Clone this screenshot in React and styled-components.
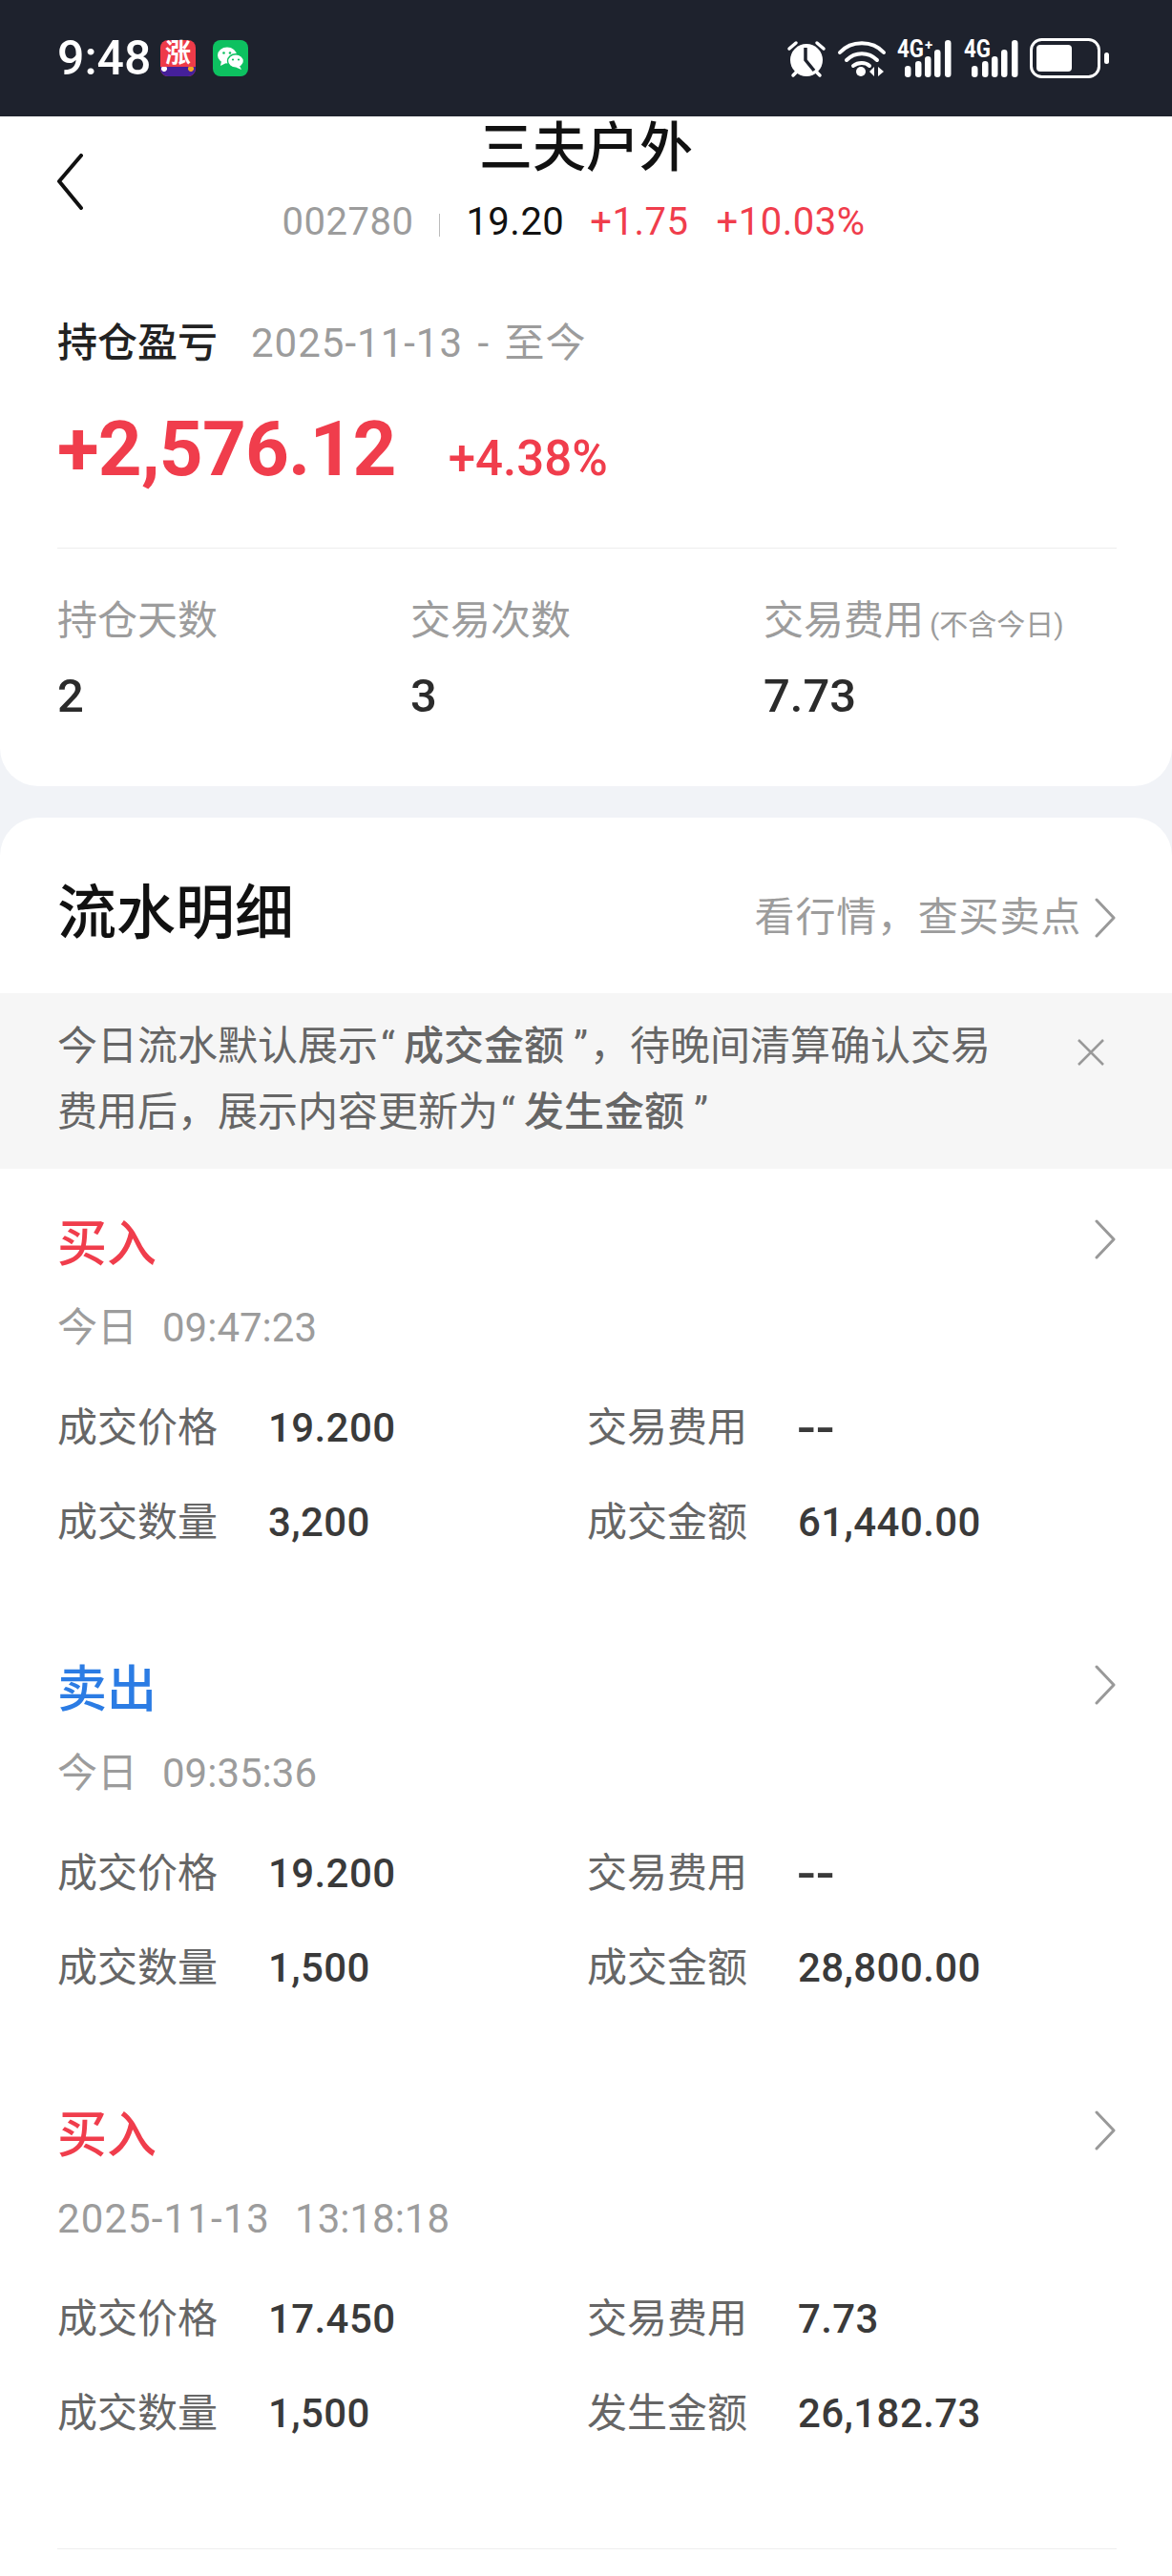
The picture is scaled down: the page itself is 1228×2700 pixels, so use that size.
import React from "react";
import styled, { createGlobalStyle } from "styled-components";

const RED = "#f03d4c";
const BLUE = "#2b7ce4";
const GRAY = "#9c9c9c";

const GlobalStyle = createGlobalStyle`
  html, body {
    margin: 0;
    padding: 0;
    background: #f1f3f7;
    font-family: Roboto, "Noto Sans CJK SC", sans-serif;
  }
`;

const Screen = styled.div`
  width: 1228px;
  height: 2700px;
  overflow: hidden;
  background: #f1f3f7;
  display: flex;
  flex-direction: column;
`;

// Status bar

const StatusBar = styled.div`
  height: 122px;
  flex: none;
  background: #1e222d;
  display: flex;
  align-items: center;
  justify-content: space-between;
  padding: 0 66px 0 60px;
  box-sizing: border-box;
  color: #fff;
`;

const StatusLeft = styled.div`
  display: flex;
  align-items: center;
`;

const Clock = styled.span`
  font-size: 50px;
  font-weight: 500;
  line-height: 60px;
  width: 108px;
`;

const AppTile = styled.div`
  width: 37px;
  height: 38px;
  border-radius: 8px;
  margin-right: 18px;
  background: ${(p) => p.$bg};
  display: flex;
  flex-direction: column;
  align-items: center;
`;

const TileGlyph = styled.span`
  height: 28px;
  color: #fff;
  font-size: 27px;
  line-height: 28px;
  font-weight: 700;
`;

const TileStrip = styled.div`
  width: 100%;
  height: 10px;
  border-radius: 0 0 8px 8px;
  background:
    radial-gradient(circle 3px at 4px 2px, #fff 95%, transparent),
    radial-gradient(circle 3px at 32px 2px, #f5a623 95%, transparent),
    #45209a;
`;

const StatusRight = styled.div`
  display: flex;
  align-items: center;
`;

const StatusSvg = styled.svg`
  overflow: visible;
  margin-right: ${(p) => p.$gap || 0}px;
`;

// Summary card

const SummaryCard = styled.section`
  flex: none;
  background: #fff;
  border-radius: 0 0 40px 40px;
  padding: 0 58px 64px 60px;
`;

const Header = styled.header`
  display: grid;
  grid-template-columns: 1fr auto 1fr;
  margin: 0 -58px 0 -60px;
  padding: 0 60px;
`;

const BackIcon = styled.svg`
  margin-top: 39px;
  width: 30px;
  height: 60px;
`;

const TitleBlock = styled.div`
  display: flex;
  flex-direction: column;
  align-items: center;
  grid-column: 2;
`;

const Title = styled.div`
  margin-top: 3px;
  font-size: 56px;
  font-weight: 500;
  line-height: 60px;
  color: #111;
`;

const Ticker = styled.div`
  margin: 24px 26px 0 0;
  display: flex;
  align-items: center;
  font-size: 40px;
  line-height: 48px;
  letter-spacing: 0.5px;
  white-space: nowrap;
`;

const TickerCode = styled.span`
  color: ${GRAY};
`;

const TickerRule = styled.span`
  width: 1px;
  height: 24px;
  margin: 6px 27px 0 27px;
  background: #bbb;
`;

const TickerValue = styled.span`
  color: ${(p) => p.$color};
  margin-right: ${(p) => p.$gap || 0}px;
`;

const ProfitHead = styled.div`
  margin-top: 73px;
  display: flex;
  line-height: 60px;
  font-size: 42px;
`;

const ProfitLabel = styled.span`
  color: #222;
  font-weight: 500;
  margin-right: 35px;
`;

const ProfitRange = styled.span`
  color: ${GRAY};
  letter-spacing: 1px;
  word-spacing: 4px;
`;

const ProfitRow = styled.div`
  margin-top: 31px;
  height: 100px;
  display: flex;
  align-items: baseline;
  line-height: 100px;
  color: ${RED};
`;

const ProfitAmount = styled.span`
  font-size: 80px;
  font-weight: 700;
  letter-spacing: -0.8px;
  margin-right: 55px;
`;

const ProfitPercent = styled.span`
  font-size: 51px;
  font-weight: 500;
`;

const Divider = styled.div`
  height: 1px;
  background: #eeeeee;
  margin-top: ${(p) => p.$top}px;
`;

const Stats = styled.div`
  margin-top: 46px;
  display: grid;
  grid-template-columns: 370px 370px 1fr;
`;

const StatLabel = styled.div`
  height: 60px;
  font-size: 42px;
  line-height: 60px;
  color: ${GRAY};
  white-space: nowrap;
`;

const StatNote = styled.span`
  font-size: 30px;
  line-height: 30px;
  margin-left: 6px;
`;

const StatValue = styled.div`
  margin-top: 19px;
  font-size: 49px;
  font-weight: 500;
  line-height: 60px;
  color: #2b2b2b;
`;

// Flow list

const FlowCard = styled.section`
  flex: 1;
  margin-top: 33px;
  background: #fff;
  border-radius: 40px 40px 0 0;
  padding-top: 58px;
`;

const FlowHead = styled.div`
  display: flex;
  align-items: center;
  justify-content: space-between;
  padding: 0 58px 0 60px;
  height: 80px;
`;

const FlowTitle = styled.h2`
  margin: 0 0 6px;
  font-size: 62px;
  font-weight: 500;
  color: #111;
`;

const QuoteLink = styled.div`
  display: flex;
  align-items: center;
  gap: 13px;
  font-size: 42px;
  line-height: 60px;
  letter-spacing: 0.8px;
  color: ${GRAY};
  margin-top: 14px;
`;

const Notice = styled.div`
  margin-top: 46px;
  height: 184px;
  box-sizing: border-box;
  padding: 21px 70px 0 60px;
  background: #f6f6f6;
  display: flex;
  justify-content: space-between;
  font-size: 42px;
  line-height: 69px;
  color: #666;
  white-space: nowrap;
`;

const CloseIcon = styled.svg`
  margin-top: 26px;
  width: 30px;
  height: 30px;
`;

const Strong = styled.b`
  font-weight: 500;
`;

// quotes in the reference carry more room than the Latin glyph has
const Quote = styled.span`
  margin: ${(p) => (p.$close ? "0 2px 0 10px" : "0 9px 0 3px")};
`;

const Records = styled.div`
  padding: 39px 58px 0 60px;
`;

const Record = styled.article`
  margin-bottom: 105px;
`;

const RecordHead = styled.div`
  display: flex;
  justify-content: space-between;
  align-items: center;
  height: 70px;
`;

const Side = styled.span`
  font-size: 52px;
  font-weight: 500;
  color: ${(p) => (p.$sell ? BLUE : RED)};
`;

const RecordTime = styled.div`
  margin-top: 33px;
  display: flex;
  gap: 26px;
  font-size: 42px;
  line-height: 50px;
  color: ${GRAY};
`;

const RecordDate = styled.span`
  letter-spacing: ${(p) => (p.$long ? "1.1px" : "0")};
`;

const Fields = styled.div`
  margin-top: 50px;
  display: grid;
  grid-template-columns: 555px 1fr;
  row-gap: 39px;
`;

const Field = styled.div`
  display: grid;
  grid-template-columns: 221px 1fr;
  line-height: 60px;
`;

const FieldLabel = styled.span`
  font-size: 42px;
  color: #666;
`;

const FieldValue = styled.span`
  font-size: 42px;
  font-weight: 500;
  letter-spacing: 0.4px;
  color: #3a3a3a;
`;

// the two dashes are much longer than hyphens of the value font
const FieldDash = styled.span`
  font-size: 64px;
  letter-spacing: 2px;
  color: #3a3a3a;
`;

const Chevron = ({ w = 24, h = 42, color = "#999" }) => (
  <svg width={w} height={h} viewBox="0 0 24 42" fill="none">
    <path d="M3 2 L21 21 L3 40" stroke={color} strokeWidth="3" strokeLinecap="round" strokeLinejoin="round" />
  </svg>
);

const WeChatGlyph = () => (
  <svg width="37" height="38" viewBox="0 0 37 38">
    <ellipse cx="15" cy="16" rx="10" ry="8.5" fill="#fff" />
    <path d="M9 22 L8 27 L14 24 Z" fill="#fff" />
    <ellipse cx="24" cy="22" rx="8.5" ry="7.2" fill="#fff" stroke="#0dc160" strokeWidth="1.4" />
    <path d="M28 27 L30 31 L24 28.5 Z" fill="#fff" />
    <circle cx="11.5" cy="13.5" r="1.3" fill="#0dc160" />
    <circle cx="18" cy="13.5" r="1.3" fill="#0dc160" />
    <circle cx="21" cy="20.5" r="1.1" fill="#0dc160" />
    <circle cx="27" cy="20.5" r="1.1" fill="#0dc160" />
  </svg>
);

const AlarmIcon = () => (
  <StatusSvg width="40" height="40" viewBox="0 0 40 40" $gap={13}>
    <circle cx="20" cy="22" r="17" fill="#fff" />
    <path d="M19 9 V22 L28 33" stroke="#1e222d" strokeWidth="3.5" fill="none" />
    <path d="M2 10 L9 4 M38 10 L31 4 M6 38 L9 35 M34 38 L31 35" stroke="#fff" strokeWidth="3.5" strokeLinecap="round" />
  </StatusSvg>
);

const WifiIcon = () => (
  <StatusSvg width="50" height="40" viewBox="0 0 50 40" $gap={12}>
    <path d="M2 14 C14 1 36 1 48 14" stroke="#fff" strokeWidth="4" fill="none" strokeLinecap="round" />
    <path d="M9 22 C18 13 32 13 41 22" stroke="#fff" strokeWidth="4" fill="none" strokeLinecap="round" />
    <path d="M16 28 C21 24 29 24 33 28" stroke="#fff" strokeWidth="4" fill="none" strokeLinecap="round" />
    <circle cx="24" cy="34" r="5" fill="#fff" />
    <path d="M38 29 V39 L33 34 Z M42 29 V39 L48 34 Z" fill="#fff" />
  </StatusSvg>
);

const SignalIcon = ({ plus, gap }) => (
  <StatusSvg width="57" height="40" viewBox="0 0 57 40" $gap={gap}>
    <text x="0" y="19" fontFamily="Roboto, sans-serif" fontWeight="700" fontSize="26" fill="#fff" textLength="28" lengthAdjust="spacingAndGlyphs">
      4G
    </text>
    {plus && (
      <text x="29" y="11" fontFamily="Roboto, sans-serif" fontWeight="700" fontSize="15" fill="#fff">
        +
      </text>
    )}
    <rect x="8" y="28" width="6.5" height="12" rx="3.2" fill="#fff" />
    <rect x="19" y="23" width="6.5" height="17" rx="3.2" fill="#fff" />
    <rect x="29" y="18" width="6.5" height="22" rx="3.2" fill="#fff" />
    <rect x="39" y="11" width="6.5" height="29" rx="3.2" fill="#fff" />
    <rect x="50" y="1" width="6.5" height="39" rx="3.2" fill="#fff" />
  </StatusSvg>
);

const BatteryIcon = () => (
  <StatusSvg width="83" height="42" viewBox="0 0 83 42">
    <rect x="1.5" y="1.5" width="71" height="39" rx="11" fill="none" stroke="#fff" strokeWidth="3" />
    <rect x="7" y="7" width="37" height="28" rx="4" fill="#fff" />
    <rect x="78" y="15" width="5" height="12" rx="2.5" fill="#fff" />
  </StatusSvg>
);

const records = [
  {
    side: "买入",
    date: "今日",
    time: "09:47:23",
    price: "19.200",
    fee: "--",
    qty: "3,200",
    amountLabel: "成交金额",
    amount: "61,440.00",
  },
  {
    side: "卖出",
    sell: true,
    date: "今日",
    time: "09:35:36",
    price: "19.200",
    fee: "--",
    qty: "1,500",
    amountLabel: "成交金额",
    amount: "28,800.00",
  },
  {
    side: "买入",
    date: "2025-11-13",
    time: "13:18:18",
    price: "17.450",
    fee: "7.73",
    qty: "1,500",
    amountLabel: "发生金额",
    amount: "26,182.73",
  },
];

export default function App() {
  return (
    <Screen>
      <GlobalStyle />
      <StatusBar>
        <StatusLeft>
          <Clock>9:48</Clock>
          <AppTile $bg="#ee3b49">
            <TileGlyph>涨</TileGlyph>
            <TileStrip />
          </AppTile>
          <AppTile $bg="#0dc160">
            <WeChatGlyph />
          </AppTile>
        </StatusLeft>
        <StatusRight>
          <AlarmIcon />
          <WifiIcon />
          <SignalIcon plus gap={13} />
          <SignalIcon gap={12} />
          <BatteryIcon />
        </StatusRight>
      </StatusBar>

      <SummaryCard>
        <Header>
          <BackIcon viewBox="0 0 30 60" fill="none">
            <path d="M25 2 L2 29 L25 57" stroke="#111" strokeWidth="4" strokeLinecap="round" strokeLinejoin="round" />
          </BackIcon>
          <TitleBlock>
            <Title>三夫户外</Title>
            <Ticker>
              <TickerCode>002780</TickerCode>
              <TickerRule />
              <TickerValue $color="#111" $gap={27}>19.20</TickerValue>
              <TickerValue $color={RED} $gap={29}>+1.75</TickerValue>
              <TickerValue $color={RED}>+10.03%</TickerValue>
            </Ticker>
          </TitleBlock>
        </Header>

        <ProfitHead>
          <ProfitLabel>持仓盈亏</ProfitLabel>
          <ProfitRange>2025-11-13 - 至今</ProfitRange>
        </ProfitHead>
        <ProfitRow>
          <ProfitAmount>+2,576.12</ProfitAmount>
          <ProfitPercent>+4.38%</ProfitPercent>
        </ProfitRow>
        <Divider $top={53} />

        <Stats>
          <div>
            <StatLabel>持仓天数</StatLabel>
            <StatValue>2</StatValue>
          </div>
          <div>
            <StatLabel>交易次数</StatLabel>
            <StatValue>3</StatValue>
          </div>
          <div>
            <StatLabel>
              交易费用<StatNote>(不含今日)</StatNote>
            </StatLabel>
            <StatValue>7.73</StatValue>
          </div>
        </Stats>
      </SummaryCard>

      <FlowCard>
        <FlowHead>
          <FlowTitle>流水明细</FlowTitle>
          <QuoteLink>
            看行情，查买卖点
            <Chevron />
          </QuoteLink>
        </FlowHead>

        <Notice>
          <div>
            今日流水默认展示<Quote>“</Quote>
            <Strong>成交金额</Strong>
            <Quote $close>”</Quote>，待晚间清算确认交易
            <br />
            费用后，展示内容更新为<Quote>“</Quote>
            <Strong>发生金额</Strong>
            <Quote $close>”</Quote>
          </div>
          <CloseIcon viewBox="0 0 30 30" fill="none">
            <path d="M2 2 L28 28 M28 2 L2 28" stroke="#999" strokeWidth="2.5" />
          </CloseIcon>
        </Notice>

        <Records>
          {records.map((r) => (
            <Record key={r.time}>
              <RecordHead>
                <Side $sell={r.sell}>{r.side}</Side>
                <Chevron />
              </RecordHead>
              <RecordTime>
                <RecordDate $long={r.date.length > 2}>{r.date}</RecordDate>
                <span>{r.time}</span>
              </RecordTime>
              <Fields>
                <Field>
                  <FieldLabel>成交价格</FieldLabel>
                  <FieldValue>{r.price}</FieldValue>
                </Field>
                <Field>
                  <FieldLabel>交易费用</FieldLabel>
                  {r.fee === "--" ? <FieldDash>{r.fee}</FieldDash> : <FieldValue>{r.fee}</FieldValue>}
                </Field>
                <Field>
                  <FieldLabel>成交数量</FieldLabel>
                  <FieldValue>{r.qty}</FieldValue>
                </Field>
                <Field>
                  <FieldLabel>{r.amountLabel}</FieldLabel>
                  <FieldValue>{r.amount}</FieldValue>
                </Field>
              </Fields>
            </Record>
          ))}
          <Divider $top={111} />
        </Records>
      </FlowCard>
    </Screen>
  );
}
